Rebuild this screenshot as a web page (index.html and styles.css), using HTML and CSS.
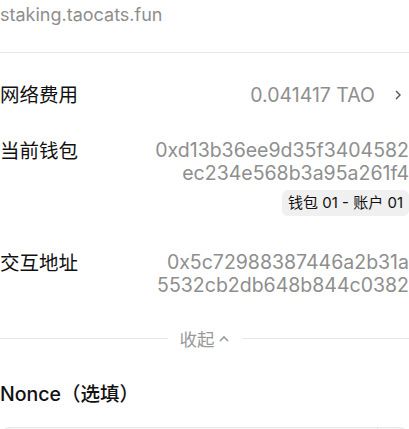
FILE: index.html
```html
<!DOCTYPE html>
<html lang="zh-CN">
<head>
  <meta charset="UTF-8" />
  <meta name="viewport" content="width=device-width, initial-scale=1.0"/>
  <title>确认交易</title>
  <link rel="stylesheet" href="styles.css">
</head>
<body>

  <div class="site">staking.taocats.fun</div>

  <div class="detalhes">
    <div class="linha linha-taxa">
      <span class="rotulo">网络费用</span>
      <span class="valor">0.041417 TAO
        <svg class="seta" width="10" height="12" viewBox="0 0 10 12"><path d="M3 2l4 4-4 4" fill="none" stroke="#555" stroke-width="1.4"/></svg>
      </span>
    </div>

    <div class="linha">
      <span class="rotulo">当前钱包</span>
      <div class="endereco">
        <div>0xd13b36ee9d35f3404582</div>
        <div>ec234e568b3a95a261f4</div>
        <span class="etiqueta">钱包 01 - 账户 01</span>
      </div>
    </div>

    <div class="linha linha-ultima">
      <span class="rotulo">交互地址</span>
      <div class="endereco">
        <div>0x5c72988387446a2b31a</div>
        <div>5532cb2db648b844c0382</div>
      </div>
    </div>
  </div>

  <div class="recolher">
    <span class="traco"></span>
    <span class="recolher-texto">收起
      <svg width="12" height="10" viewBox="0 0 12 10"><path d="M2 7l4-4 4 4" fill="none" stroke="#999" stroke-width="1.6"/></svg>
    </span>
    <span class="traco"></span>
  </div>

  <div class="nonce">Nonce（选填）</div>
  <div class="campo"><span class="campo-fim"></span></div>

</body>
</html>
```

FILE: styles.css
```css
* {
  box-sizing: border-box;
  margin: 0;
  padding: 0;
}

body {
  font-family: Inter, "Noto Sans CJK SC", sans-serif;
  background-color: #fff;
  color: #111;
  width: 409px;
  overflow: hidden;
}

.site {
  font-size: 18px;
  color: #8e8e8e;
  line-height: 24px;
  padding-top: 3px;
  padding-bottom: 25px;
  border-bottom: 1px solid #e6e6e6;
}

.detalhes {
  padding-top: 30px;
}

.linha {
  display: flex;
  justify-content: space-between;
  align-items: flex-start;
  margin-bottom: 35px;
}

.linha-taxa {
  margin-bottom: 32px;
}

.linha-ultima {
  margin-bottom: 29px;
}

.rotulo {
  font-size: 19.5px;
  line-height: 24px;
}

.valor {
  font-size: 19.5px;
  color: #8e8e8e;
  line-height: 24px;
  display: flex;
  align-items: center;
  gap: 18px;
  padding-right: 6px;
}

.endereco {
  font-size: 19.5px;
  color: #8e8e8e;
  line-height: 23px;
  text-align: right;
  display: flex;
  flex-direction: column;
  align-items: flex-end;
}

.etiqueta {
  margin-top: 5px;
  background-color: #f0f0f0;
  color: #111;
  font-size: 15px;
  line-height: 26px;
  padding: 0 6px;
  border-radius: 6px;
}

.recolher {
  display: flex;
  align-items: center;
  gap: 12px;
}

.traco {
  flex: 1;
  height: 1px;
  background-color: #e6e6e6;
}

.recolher-texto {
  font-size: 17.5px;
  color: #999;
  display: flex;
  align-items: center;
  gap: 3px;
}

.nonce {
  font-size: 19.5px;
  font-weight: 500;
  margin-top: 31px;
  line-height: 24px;
}

.campo {
  margin-top: 21px;
  height: 50px;
  border: 1px solid #e6e6e6;
  border-radius: 10px;
  background-color: #f7f7f7;
  position: relative;
}

.campo-fim {
  position: absolute;
  right: 30px;
  top: 0;
  bottom: 0;
  width: 1px;
  background-color: #e6e6e6;
}
```
